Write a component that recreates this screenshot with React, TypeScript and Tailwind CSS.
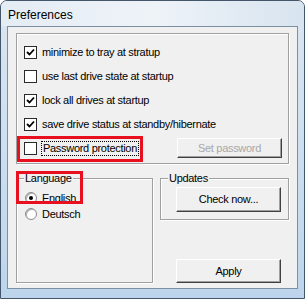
import type { ReactNode } from 'react';

const OPTIONS = [
  { label: 'minimize to tray at stratup', checked: true },
  { label: 'use last drive state at startup', checked: false },
  { label: 'lock all drives at startup', checked: true },
  { label: 'save drive status at standby/hibernate', checked: true },
];

function CheckBox({ checked }: { checked: boolean }) {
  return (
    <span className="w-[13px] h-[13px] shrink-0 border border-[#2a2a2a] bg-white flex items-center justify-center">
      {checked && (
        <svg width="9" height="9" viewBox="0 0 9 9">
          <path d="M1 4 L3.5 6.5 L8 1.5" stroke="#000" strokeWidth="1.8" fill="none" />
        </svg>
      )}
    </span>
  );
}

function Radio({ checked }: { checked: boolean }) {
  return (
    <span className="w-[12px] h-[12px] shrink-0 rounded-full border border-[#8a8a8a] bg-white flex items-center justify-center shadow-[inset_1px_1px_0_#b0b0b0]">
      {checked && <span className="w-[4px] h-[4px] rounded-full bg-black" />}
    </span>
  );
}

function Button({ children, disabled, className }: { children: ReactNode; disabled?: boolean; className?: string }) {
  return (
    <div
      className={[
        'w-[105px] flex items-center justify-center bg-[#f0f0f0] border-t border-l border-white border-r border-b border-r-[#404040] border-b-[#404040] shadow-[inset_-1px_-1px_0_#a0a0a0]',
        disabled ? 'text-[#a8a8a8]' : 'text-black',
        className ?? '',
      ].join(' ')}
    >
      {children}
    </div>
  );
}

function GroupBox({ label, className, children }: { label: string; className?: string; children?: ReactNode }) {
  return (
    <div className={['relative border border-[#a0a0a0] shadow-[inset_1px_1px_0_#fff,1px_1px_0_#fff]', className ?? ''].join(' ')}>
      <span className="absolute -top-[8px] left-[7px] px-[1px] bg-[#f0f0f0] leading-[14px]">{label}</span>
      {children}
    </div>
  );
}

export default function App() {
  return (
    <div
      className="w-[305px] h-[299px] overflow-hidden rounded-t-[7px] border border-[#43566a] bg-gradient-to-b from-[#dbe6f1] via-[#cddff0] to-[#bcd5ec] flex flex-col text-black"
      style={{ fontFamily: '"Liberation Sans", Arial, sans-serif' }}
    >
      <div className="h-[25px] shrink-0 flex items-center pl-[7px] pt-[2px] text-[12px] bg-gradient-to-r from-[#e4ecf4] via-[#eef3f8] to-[#d8e4ef]">
        Preferences
      </div>
      <div className="flex-1 mx-[6px] mb-[9px] border border-[#7d8fa2] bg-[#f0f0f0] text-[11px] tracking-[-0.3px] px-[8px] pt-[6px] pb-[5px] flex flex-col">
        <div className="relative h-[131px] border border-[#a0a0a0] shadow-[inset_1px_1px_0_#fff,1px_1px_0_#fff] pl-[7px] pt-[6px] flex flex-col">
          {OPTIONS.map(o => (
            <div key={o.label} className="h-[24px] flex items-center gap-[5px]">
              <CheckBox checked={o.checked} />
              <span>{o.label}</span>
            </div>
          ))}
          <div className="h-[24px] flex items-center">
            <div className="flex items-center gap-[4px]">
              <CheckBox checked={false} />
              <span className="border border-dotted border-black px-[1px] leading-[13px]">Password protection</span>
            </div>
            <Button disabled className="h-[20px] ml-auto mr-[6px]">Set password</Button>
          </div>
          <div className="absolute left-[0px] top-[102px] w-[126px] h-[26px] border-[3px] border-[#e8101e]" />
        </div>

        <div className="flex-1 flex gap-[7px] mt-[14px]">
          <GroupBox label="Language" className="w-[137px] pl-[8px] pt-[11px]">
            <div className="h-[16px] flex items-center gap-[5px]">
              <Radio checked />
              <span>English</span>
            </div>
            <div className="h-[16px] flex items-center gap-[5px]">
              <Radio checked={false} />
              <span>Deutsch</span>
            </div>
            <div className="absolute -left-[1px] -top-[8px] w-[67px] h-[33px] border-[3px] border-[#e8101e]" />
          </GroupBox>
          <div className="flex-1 flex flex-col">
            <GroupBox label="Updates" className="h-[42px] pl-[15px] pt-[8px]">
              <Button className="h-[25px]">Check now...</Button>
            </GroupBox>
            <Button className="h-[24px] mt-auto ml-[16px]">Apply</Button>
          </div>
        </div>
      </div>
    </div>
  );
}
